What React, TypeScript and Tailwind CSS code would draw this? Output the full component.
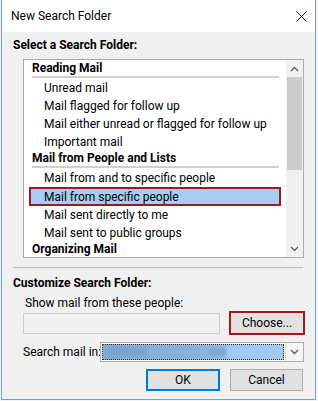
import React from "react";

function Chevron({ up }: { up?: boolean }) {
  return (
    <svg width="9" height="6" viewBox="0 0 9 6" className="block">
      <polyline
        points={up ? "1,5 4.5,1.5 8,5" : "1,1 4.5,4.5 8,1"}
        fill="none"
        stroke="#606060"
        strokeWidth="1.3"
      />
    </svg>
  );
}

function Header({ label }: { label: string }) {
  return (
    <div className="ml-[8px] mr-[7px] h-[18px] flex flex-col">
      <div className="h-[14px] leading-[14px] font-bold whitespace-nowrap">{label}</div>
      <div className="mt-[1px] h-[2px] bg-[#cfcfcf]" />
    </div>
  );
}

function Item({ label, selected }: { label: string; selected?: boolean }) {
  return (
    <div
      className={
        selected
          ? "ml-[5px] mr-[5px] h-[19px] border-2 border-[#a3161f] bg-[#a6cef0] pl-[13px] flex items-center whitespace-nowrap"
          : "ml-[5px] mr-[5px] h-[18px] border-2 border-transparent pl-[13px] flex items-center whitespace-nowrap"
      }
    >
      {label}
    </div>
  );
}

export default function App() {
  return (
    <div className="w-[318px] h-[401px] bg-[#f3f5f8] overflow-hidden font-['Roboto',sans-serif] text-[12px] text-black">
      <div className="ml-[1px] w-[315px] h-[400px] border-x border-b border-[#6f9fd2] bg-[#f0f0f0] flex flex-col">
        {/* title bar */}
        <div className="h-[32px] bg-white flex items-center justify-between pl-[9px] pr-[8px] shrink-0">
          <span className="text-[12px]">New Search Folder</span>
          <svg width="11" height="11" viewBox="0 0 11 11" className="block">
            <line x1="0.5" y1="0.5" x2="10.5" y2="10.5" stroke="#111" strokeWidth="1" />
            <line x1="10.5" y1="0.5" x2="0.5" y2="10.5" stroke="#111" strokeWidth="1" />
          </svg>
        </div>

        {/* body */}
        <div className="flex-1 pl-[11px] pt-[5px] flex flex-col">
          <div className="leading-[16px] font-bold">Select a Search Folder:</div>

          {/* list box */}
          <div className="mt-[6px] ml-[10px] w-[281px] h-[199px] border border-[#ababab] bg-white flex overflow-hidden shrink-0">
            <div className="flex-1 pt-[1px] overflow-hidden">
              <Header label="Reading Mail" />
              <Item label="Unread mail" />
              <Item label="Mail flagged for follow up" />
              <Item label="Mail either unread or flagged for follow up" />
              <Item label="Important mail" />
              <Header label="Mail from People and Lists" />
              <Item label="Mail from and to specific people" />
              <Item label="Mail from specific people" selected />
              <Item label="Mail sent directly to me" />
              <Item label="Mail sent to public groups" />
              <Header label="Organizing Mail" />
            </div>
            <div className="w-[17px] bg-[#f0f0f0] flex flex-col">
              <div className="h-[17px] flex items-center justify-center">
                <Chevron up />
              </div>
              <div className="h-[93px] mx-[1px] bg-[#cdcdcd]" />
              <div className="flex-1" />
              <div className="h-[17px] flex items-center justify-center">
                <Chevron />
              </div>
            </div>
          </div>

          {/* separator */}
          <div className="mt-[9px] w-[290px] h-px bg-[#bdbdbd] shrink-0" />

          <div className="mt-[7px] leading-[16px] font-bold">Customize Search Folder:</div>
          <div className="mt-[4px] ml-[12px] leading-[16px]">Show mail from these people:</div>

          <div className="h-[24px] flex items-center shrink-0">
            <div className="ml-[10px] w-[197px] h-[21px] border border-[#cccccc] bg-[#f0f0f0]" />
            <div className="ml-[9px] w-[76px] h-[24px] border-2 border-[#a3161f] bg-[#e1e1e1] flex items-center justify-center">
              Choose...
            </div>
          </div>

          <div className="mt-[7px] h-[20px] flex items-center shrink-0">
            <div className="ml-[10px] w-[77px] whitespace-nowrap">Search mail in:</div>
            <div className="w-[204px] h-[20px] border border-[#adadad] bg-white flex">
              <div className="m-[1px] flex-1 border border-dotted border-[#333] relative overflow-hidden bg-linear-to-r from-[#86acd3] via-[#8fb4da] to-[#a2cdf2]">
                <div className="absolute left-[4px] top-[3px] w-[40px] h-[8px] bg-[#7aa1cb] blur-[2px]" />
                <div className="absolute left-[50px] top-[2px] w-[50px] h-[10px] bg-[#8aaed5] blur-[2px]" />
                <div className="absolute left-[105px] top-[3px] w-[18px] h-[8px] bg-[#7ea4cc] blur-[2px]" />
                <div className="absolute left-[124px] top-0 w-[60px] h-full bg-[#a0cbf1] blur-[1px]" />
              </div>
              <div className="w-[18px] border-l border-[#d0d0d0] bg-[#f4f4f4] flex items-center justify-center">
                <Chevron />
              </div>
            </div>
          </div>

          <div className="mt-[7px] h-[22px] flex shrink-0">
            <div className="ml-[133px] w-[74px] h-[22px] border-2 border-[#0078d7] bg-[#e1e1e1] flex items-center justify-center">
              OK
            </div>
            <div className="ml-[10px] w-[73px] h-[22px] border border-[#adadad] bg-[#e1e1e1] flex items-center justify-center">
              Cancel
            </div>
          </div>
        </div>
      </div>
    </div>
  );
}
